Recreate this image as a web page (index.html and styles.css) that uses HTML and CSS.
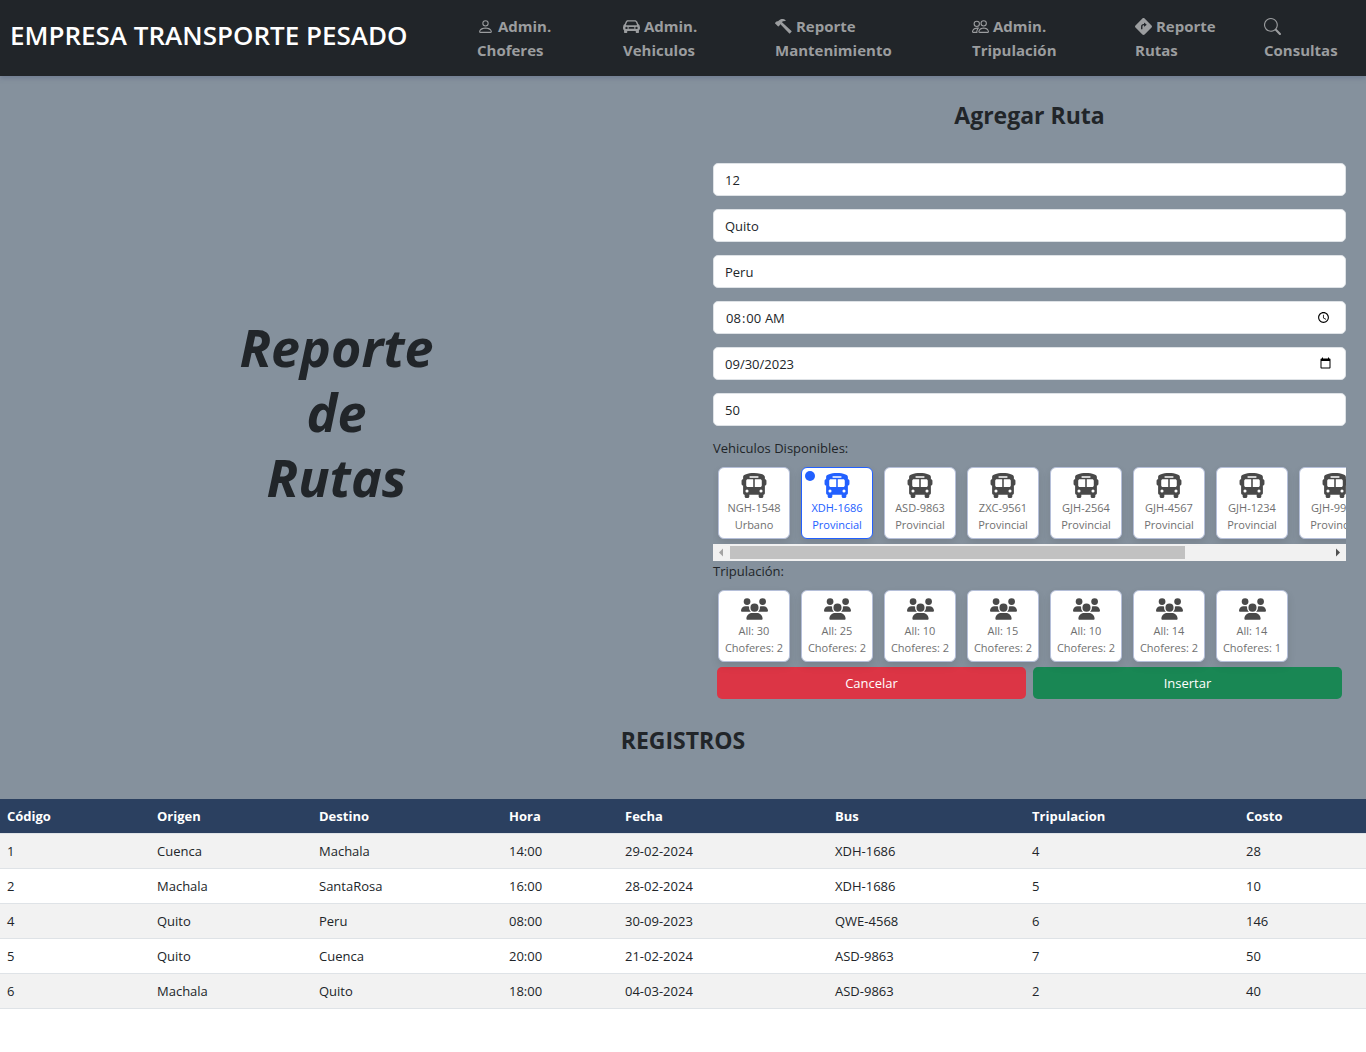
FILE: index.html
```html
<!DOCTYPE html>
<html lang="es">
<head>
<meta charset="utf-8">
<meta name="viewport" content="width=device-width, initial-scale=1">
<title>Reporte de Rutas</title>
<link rel="stylesheet" href="styles.css">
</head>
<body>
<svg class="sprite" aria-hidden="true">
  <symbol id="person" viewBox="0 0 16 16"><path d="M8 8a3 3 0 1 0 0-6 3 3 0 0 0 0 6zm2-3a2 2 0 1 1-4 0 2 2 0 0 1 4 0zm4 8c0 1-1 1-1 1H3s-1 0-1-1 1-4 6-4 6 3 6 4zm-1-.004c-.001-.246-.154-.986-.832-1.664C11.516 10.68 10.289 10 8 10c-2.29 0-3.516.68-4.168 1.332-.678.678-.83 1.418-.832 1.664h10z"/></symbol>
  <symbol id="car" viewBox="0 0 16 16"><path fill-rule="evenodd" d="M2.52 3.515A2.5 2.5 0 0 1 4.82 2h6.362c1 0 1.904.596 2.298 1.515l.792 1.848c.075.175.21.319.38.404.5.25.855.715.965 1.262l.335 1.679c.033.161.049.325.049.49v.413c0 .814-.39 1.543-1 1.997V13.5a.5.5 0 0 1-.5.5h-2a.5.5 0 0 1-.5-.5v-1.338c-1.292.048-2.745.088-4 .088s-2.708-.04-4-.088V13.5a.5.5 0 0 1-.5.5h-2a.5.5 0 0 1-.5-.5v-1.892c-.61-.454-1-1.183-1-1.997v-.413a2.5 2.5 0 0 1 .049-.49l.335-1.68c.11-.546.465-1.012.964-1.261a.807.807 0 0 0 .381-.404l.792-1.848ZM4.7 3.4a1 1 0 0 0-.9.6L2.9 6.2a.4.4 0 0 0 .4.6h9.400a.4.4 0 0 0 .4-.6L12.200 4a1 1 0 0 0-.9-.6ZM4.400 9.300a1.100 1.100 0 1 0-2.200 0 1.100 1.100 0 0 0 2.200 0ZM13.800 9.300a1.100 1.100 0 1 0-2.200 0 1.100 1.100 0 0 0 2.200 0ZM6 8.500a.8.8 0 0 0 0 1.600h4a.8.8 0 0 0 0-1.600Z"/></symbol>
  <symbol id="hammer" viewBox="0 0 16 16"><path d="M9.972 2.508a.5.5 0 0 0-.16-.556l-.178-.129a5.009 5.009 0 0 0-2.076-.783C6.215.862 4.504 1.229 2.84 3.133H1.786a.5.5 0 0 0-.354.147L.146 4.567a.5.5 0 0 0 0 .706l2.571 2.579a.5.5 0 0 0 .708 0l1.286-1.29a.5.5 0 0 0 .146-.353V5.57l8.387 8.873A.5.5 0 0 0 14 14.5l1.5-1.5a.5.5 0 0 0 .017-.689l-9.129-8.63c.747-.456 1.772-.839 3.112-.839a.5.5 0 0 0 .472-.334z"/></symbol>
  <symbol id="people" viewBox="0 0 16 16"><path d="M15 14s1 0 1-1-1-4-5-4-5 3-5 4 1 1 1 1h8zm-7.978-1A.261.261 0 0 1 7 12.996c.001-.264.167-1.03.76-1.72C8.312 10.629 9.282 10 11 10c1.717 0 2.687.63 3.24 1.276.593.69.758 1.457.76 1.72l-.008.002a.274.274 0 0 1-.014.002H7.022zM11 7a2 2 0 1 0 0-4 2 2 0 0 0 0 4zm3-2a3 3 0 1 1-6 0 3 3 0 0 1 6 0zM6.936 9.28a5.88 5.88 0 0 0-1.23-.247A7.35 7.35 0 0 0 5 9c-4 0-5 3-5 4 0 .667.333 1 1 1h4.216A2.238 2.238 0 0 1 5 13c0-1.01.377-2.042 1.09-2.904.243-.294.526-.569.846-.816zM4.92 10A5.493 5.493 0 0 0 4 13H1c0-.26.164-1.03.76-1.724.545-.636 1.492-1.256 3.16-1.275zM1.500 5.500a3 3 0 1 1 6 0 3 3 0 0 1-6 0zm3-2a2 2 0 1 0 0 4 2 2 0 0 0 0-4z"/></symbol>
  <symbol id="turn" viewBox="0 0 16 16"><path d="M9.05.435c-.58-.58-1.52-.58-2.100 0L.436 6.95c-.58.58-.58 1.519 0 2.098l6.516 6.516c.58.58 1.519.58 2.098 0l6.516-6.516c.58-.58.58-1.519 0-2.098L9.05.435ZM8.500 8V6.900h-.4A1.100 1.100 0 0 0 7 8v2.500H5.700V8.200A2.500 2.500 0 0 1 8.200 5.700h.3V4.700a.25.25 0 0 1 .41-.19l1.900 1.600c.12.1.12.28 0 .38l-1.900 1.600A.25.25 0 0 1 8.500 8Z"/></symbol>
  <symbol id="search" viewBox="0 0 16 16"><path d="M11.742 10.344a6.500 6.500 0 1 0-1.397 1.398h-.001c.03.04.062.078.098.115l3.850 3.850a1 1 0 0 0 1.415-1.414l-3.850-3.850a1.007 1.007 0 0 0-.115-.1zM12 6.500a5.500 5.500 0 1 1-11 0 5.500 5.500 0 0 1 11 0z"/></symbol>
  <symbol id="bus" viewBox="0 0 576 512"><path d="M288 0C422.4 0 512 35.2 512 80V96l0 32c17.7 0 32 14.3 32 32v64c0 17.7-14.3 32-32 32l0 160c0 17.7-14.3 32-32 32v32c0 17.7-14.3 32-32 32H416c-17.7 0-32-14.3-32-32V448H192v32c0 17.7-14.3 32-32 32H128c-17.7 0-32-14.3-32-32l0-32c-17.7 0-32-14.3-32-32l0-160c-17.7 0-32-14.3-32-32V160c0-17.7 14.3-32 32-32h0V96h0V80C64 35.2 153.6 0 288 0zM128 160v96c0 17.7 14.3 32 32 32H272V128H160c-17.7 0-32 14.3-32 32zM304 288H416c17.7 0 32-14.3 32-32V160c0-17.7-14.3-32-32-32H304V288zM144 400a32 32 0 1 0 0-64 32 32 0 1 0 0 64zm288 0a32 32 0 1 0 0-64 32 32 0 1 0 0 64zM384 80c0-8.8-7.2-16-16-16H208c-8.8 0-16 7.2-16 16s7.2 16 16 16H368c8.8 0 16-7.2 16-16z"/></symbol>
  <symbol id="crew" viewBox="0 0 640 512"><path d="M144 0a80 80 0 1 1 0 160A80 80 0 1 1 144 0zM512 0a80 80 0 1 1 0 160A80 80 0 1 1 512 0zM0 298.7C0 239.8 47.8 192 106.7 192h42.7c15.9 0 31 3.5 44.6 9.7c-1.3 7.2-1.9 14.7-1.9 22.3c0 38.2 16.8 72.5 43.3 96c-.2 0-.4 0-.7 0H21.3C9.6 320 0 310.4 0 298.7zM405.3 320c-.2 0-.4 0-.7 0c26.6-23.5 43.3-57.8 43.3-96c0-7.6-.7-15-1.9-22.3c13.6-6.3 28.7-9.7 44.6-9.7h42.7C592.2 192 640 239.8 640 298.7c0 11.8-9.6 21.3-21.3 21.3H405.3zM224 224a96 96 0 1 1 192 0 96 96 0 1 1 -192 0zM128 485.3C128 411.7 187.7 352 261.3 352H378.7C452.3 352 512 411.7 512 485.3c0 14.7-11.9 26.7-26.7 26.7H154.7c-14.7 0-26.7-11.9-26.7-26.7z"/></symbol>
</svg>

<header class="topbar">
  <a class="brand" href="#">EMPRESA TRANSPORTE PESADO</a>
  <nav class="menu">
    <a href="#"><svg class="menu-icon"><use href="#person"/></svg> Admin.<br>Choferes</a>
    <a href="#"><svg class="menu-icon"><use href="#car"/></svg> Admin.<br>Vehiculos</a>
    <a href="#"><svg class="menu-icon"><use href="#hammer"/></svg> Reporte<br>Mantenimiento</a>
    <a href="#"><svg class="menu-icon"><use href="#people"/></svg> Admin.<br>Tripulación</a>
    <a href="#"><svg class="menu-icon"><use href="#turn"/></svg> Reporte<br>Rutas</a>
    <a href="#"><svg class="menu-icon"><use href="#search"/></svg><br>Consultas</a>
  </nav>
</header>

<main>
  <div class="panel">
    <div class="split">
      <h1 class="hero">Reporte<br>de<br>Rutas</h1>
      <form class="route-form">
        <h2 class="heading">Agregar Ruta</h2>
        <div class="fields">
          <input class="field" type="text" aria-label="Código" value="12">
          <input class="field" type="text" aria-label="Origen" value="Quito">
          <input class="field" type="text" aria-label="Destino" value="Peru">
          <input class="field" type="time" aria-label="Hora" value="08:00">
          <input class="field" type="date" aria-label="Fecha" value="2023-09-30">
          <input class="field" type="text" aria-label="Costo" value="50">
        </div>
        <fieldset class="group">
          <legend>Vehiculos Disponibles:</legend>
          <div class="tiles tiles-scroll">
            <label class="tile"><input type="radio" name="bus"><svg class="bus"><use href="#bus"/></svg><span>NGH-1548</span><span>Urbano</span></label>
            <label class="tile"><input type="radio" name="bus" checked><svg class="bus"><use href="#bus"/></svg><span>XDH-1686</span><span>Provincial</span></label>
            <label class="tile"><input type="radio" name="bus"><svg class="bus"><use href="#bus"/></svg><span>ASD-9863</span><span>Provincial</span></label>
            <label class="tile"><input type="radio" name="bus"><svg class="bus"><use href="#bus"/></svg><span>ZXC-9561</span><span>Provincial</span></label>
            <label class="tile"><input type="radio" name="bus"><svg class="bus"><use href="#bus"/></svg><span>GJH-2564</span><span>Provincial</span></label>
            <label class="tile"><input type="radio" name="bus"><svg class="bus"><use href="#bus"/></svg><span>GJH-4567</span><span>Provincial</span></label>
            <label class="tile"><input type="radio" name="bus"><svg class="bus"><use href="#bus"/></svg><span>GJH-1234</span><span>Provincial</span></label>
            <label class="tile"><input type="radio" name="bus"><svg class="bus"><use href="#bus"/></svg><span>GJH-9988</span><span>Provincial</span></label>
          </div>
          <div class="scrollbar" aria-hidden="true">
            <svg class="arrow arrow-off" viewBox="0 0 17 17"><path d="M10 4.500v8L6 8.500z"/></svg>
            <div class="track"><div class="thumb"></div></div>
            <svg class="arrow" viewBox="0 0 17 17"><path d="M7 4.500v8l4-4z"/></svg>
          </div>
        </fieldset>
        <fieldset class="group">
          <legend>Tripulación:</legend>
          <div class="tiles">
            <label class="tile"><input type="radio" name="crew"><svg class="crew"><use href="#crew"/></svg><span>All: 30</span><span>Choferes: 2</span></label>
            <label class="tile"><input type="radio" name="crew"><svg class="crew"><use href="#crew"/></svg><span>All: 25</span><span>Choferes: 2</span></label>
            <label class="tile"><input type="radio" name="crew"><svg class="crew"><use href="#crew"/></svg><span>All: 10</span><span>Choferes: 2</span></label>
            <label class="tile"><input type="radio" name="crew"><svg class="crew"><use href="#crew"/></svg><span>All: 15</span><span>Choferes: 2</span></label>
            <label class="tile"><input type="radio" name="crew"><svg class="crew"><use href="#crew"/></svg><span>All: 10</span><span>Choferes: 2</span></label>
            <label class="tile"><input type="radio" name="crew"><svg class="crew"><use href="#crew"/></svg><span>All: 14</span><span>Choferes: 2</span></label>
            <label class="tile"><input type="radio" name="crew"><svg class="crew"><use href="#crew"/></svg><span>All: 14</span><span>Choferes: 1</span></label>
          </div>
        </fieldset>
        <div class="actions">
          <button class="btn btn-cancel" type="reset">Cancelar</button>
          <button class="btn btn-insert" type="submit">Insertar</button>
        </div>
      </form>
    </div>
    <h2 class="heading records-title">REGISTROS</h2>
  </div>
  <table class="records">
    <colgroup><col class="c-code"><col class="c-from"><col class="c-to"><col class="c-time"><col class="c-date"><col class="c-bus"><col class="c-crew"><col class="c-cost"></colgroup>
    <thead>
      <tr><th>Código</th><th>Origen</th><th>Destino</th><th>Hora</th><th>Fecha</th><th>Bus</th><th>Tripulacion</th><th>Costo</th></tr>
    </thead>
    <tbody>
      <tr><td>1</td><td>Cuenca</td><td>Machala</td><td>14:00</td><td>29-02-2024</td><td>XDH-1686</td><td>4</td><td>28</td></tr>
      <tr><td>2</td><td>Machala</td><td>SantaRosa</td><td>16:00</td><td>28-02-2024</td><td>XDH-1686</td><td>5</td><td>10</td></tr>
      <tr><td>4</td><td>Quito</td><td>Peru</td><td>08:00</td><td>30-09-2023</td><td>QWE-4568</td><td>6</td><td>146</td></tr>
      <tr><td>5</td><td>Quito</td><td>Cuenca</td><td>20:00</td><td>21-02-2024</td><td>ASD-9863</td><td>7</td><td>50</td></tr>
      <tr><td>6</td><td>Machala</td><td>Quito</td><td>18:00</td><td>04-03-2024</td><td>ASD-9863</td><td>2</td><td>40</td></tr>
    </tbody>
  </table>
</main>
</body>
</html>
```
FILE: styles.css
```css
* { box-sizing: border-box; }

body {
  margin: 0;
  background: #fff;
  color: #212529;
  font-family: "Open Sans", "Noto Sans", sans-serif;
  font-size: 13px;
  line-height: 20px;
}

.sprite { display: none; }

/* Top bar */
.topbar {
  display: grid;
  grid-template-columns: 477fr 889fr;
  align-items: center;
  padding: 14px 0;
  background: #212529;
  box-shadow: 0 2px 5px rgba(70, 80, 120, 0.35);
  position: relative;
}
.brand {
  padding: 0 0 6px 10px;
  color: #fff;
  font-size: 26px;
  font-weight: 600;
  line-height: 36px;
  text-decoration: none;
  white-space: nowrap;
}
.menu {
  display: grid;
  grid-template-columns: 146fr 152fr 197fr 163fr 129fr 102fr;
}
.menu a {
  color: #9b9d9f;
  font-size: 15px;
  font-weight: 700;
  line-height: 24px;
  text-decoration: none;
  white-space: nowrap;
}
.menu-icon {
  width: 17px;
  height: 17px;
  fill: currentColor;
  vertical-align: -3px;
}

/* Form panel */
.panel {
  background: #85919d;
  padding-bottom: 43px;
}
.split {
  display: grid;
  grid-template-columns: 1fr 1fr;
  gap: 20px;
}
.hero {
  align-self: center;
  margin: 0;
  padding-top: 22px;
  font-size: 52px;
  font-style: italic;
  font-weight: 700;
  line-height: 65px;
  text-align: center;
}
.route-form { padding: 23px 20px 25px; min-width: 0; }
.heading {
  margin: 0;
  font-size: 23px;
  font-weight: 700;
  line-height: 32px;
  text-align: center;
}
.fields {
  display: grid;
  gap: 13px;
  margin: 32px 0 12px;
}
.field {
  width: 100%;
  height: 33px;
  padding: 5px 11px;
  border: 1px solid #dee2e6;
  border-radius: 5px;
  background: #fff;
  color: #212529;
  font: inherit;
}
.field[type="date"]::-webkit-datetime-edit-month-field,
.field[type="date"]::-webkit-datetime-edit-day-field,
.field[type="date"]::-webkit-datetime-edit-year-field { padding: 0; }
.group {
  margin: 0;
  padding: 0;
  border: 0;
  min-width: 0;
}
.group legend {
  padding: 0;
  font-weight: 500;
}
.tiles {
  display: flex;
  gap: 11px;
  padding: 9px 5px 5px;
}
.tiles-scroll {
  overflow-x: auto;
  scrollbar-width: none;
}
.scrollbar {
  display: flex;
  height: 17px;
  background: #f1f1f1;
}
.arrow {
  flex: none;
  width: 17px;
  height: 17px;
  fill: #505050;
}
.arrow-off { fill: #a3a3a3; }
.track {
  flex: 1;
  padding: 2px 0;
}
.thumb {
  width: 76%;
  height: 13px;
  background: #c1c1c1;
}
.tile {
  position: relative;
  display: flex;
  flex: none;
  flex-direction: column;
  align-items: center;
  width: 72px;
  height: 72px;
  padding-top: 5px;
  border: 1px solid #b5bfd9;
  border-radius: 6px;
  background: #fff;
  box-shadow: 0 4px 8px rgba(0, 0, 0, 0.1);
  color: #707070;
  fill: #494949;
  font-size: 11px;
  line-height: 17px;
  white-space: nowrap;
}
.tile input {
  position: absolute;
  top: 3px;
  left: 3px;
  width: 10px;
  height: 10px;
  margin: 0;
  border-radius: 50%;
  appearance: none;
}
.tile input:checked { background: #2260ff; }
.tile:has(input:checked) {
  border-color: #2260ff;
  color: #2260ff;
  fill: #2260ff;
}
.bus { width: 28px; height: 25px; margin-bottom: 1px; }
.crew { width: 27px; height: 22px; margin: 2px 0; }
.actions {
  display: grid;
  grid-template-columns: 1fr 1fr;
  gap: 7px;
  padding: 0 4px;
}
.btn {
  height: 32px;
  border: 0;
  border-radius: 5px;
  color: #fff;
  font: inherit;
}
.btn-cancel { background: #dc3545; }
.btn-insert { background: #198754; }

/* Records */
.records {
  width: 100%;
  border-collapse: collapse;
  table-layout: fixed;
}
.records th,
.records td {
  height: 35px;
  padding: 0 7px;
  border-bottom: 1px solid #dfe3e7;
  text-align: left;
}
.records th {
  height: 34px;
  background: #2b4060;
  color: #fff;
  font-weight: 700;
}
.records tbody tr:nth-child(odd) { background: #f2f2f2; }
.c-code { width: 150px; }
.c-from { width: 162px; }
.c-to { width: 190px; }
.c-time { width: 116px; }
.c-date { width: 210px; }
.c-bus { width: 197px; }
.c-crew { width: 214px; }
.c-cost { width: 127px; }
```
